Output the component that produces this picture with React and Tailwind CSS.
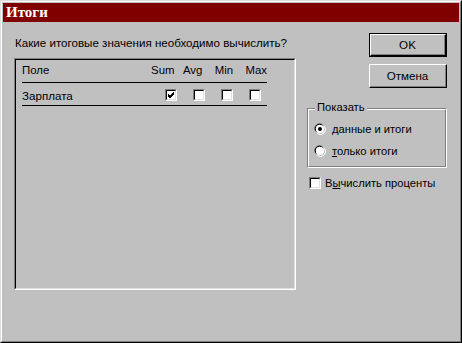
import React from "react";

const font = { fontFamily: '"Liberation Sans", Arial, sans-serif' };

const CheckBox = ({ checked }) => (
  <div className="w-[12px] h-[12px] border-t border-l border-[#808080] border-b border-r border-b-white border-r-white">
    <div className="w-full h-full border-t border-l border-black border-b border-r border-b-[#dfdfdf] border-r-[#dfdfdf] bg-white flex items-center justify-center">
      {checked && (
        <svg width="8" height="8" viewBox="0 0 8 8">
          <path d="M1 3 L3 5 L7 1 M1 4 L3 6 L7 2 M1 5 L3 7 L7 3" stroke="#000" strokeWidth="1" fill="none" />
        </svg>
      )}
    </div>
  </div>
);

const Radio = ({ checked }) => (
  <svg width="12" height="12" viewBox="0 0 12 12">
    <path d="M1.5 8.5 A5 5 0 0 1 8.5 1.5" stroke="#808080" fill="none" />
    <path d="M2.5 8.5 A4 4 0 0 1 8.5 2.5" stroke="#000" fill="none" />
    <path d="M3.5 10.5 A5 5 0 0 0 10.5 3.5" stroke="#fff" fill="none" />
    <circle cx="6" cy="6" r="4" fill="#fff" />
    {checked && <circle cx="6" cy="6" r="2" fill="#000" />}
  </svg>
);

const Button = ({ children, isDefault }) =>
  isDefault ? (
    <div className="w-[78px] h-[24px] border border-black">
      <div className="w-full h-full border-t border-l border-white border-b border-r border-b-black border-r-black">
        <div className="w-full h-full border-b border-r border-[#808080] border-t-0 border-l-0 flex items-center justify-center text-[11.6px] text-black">
          {children}
        </div>
      </div>
    </div>
  ) : (
    <div className="w-[78px] h-[24px] border-t border-l border-white border-b border-r border-b-black border-r-black">
      <div className="w-full h-full border-b border-r border-[#808080] flex items-center justify-center text-[11.6px] text-black">
        {children}
      </div>
    </div>
  );

export default function App() {
  return (
    <div
      className="w-[462px] h-[343px] bg-[#c0c0c0] border border-t-[#dfdfdf] border-l-[#dfdfdf] border-b-black border-r-black"
      style={font}
    >
      <div className="w-full h-full border border-t-white border-l-white border-b-[#808080] border-r-[#808080] p-px flex flex-col">
        <div className="h-[19px] bg-[#800000] flex items-center pl-[3px]">
          <span
            className="text-white font-bold text-[15px] leading-none"
            style={{ fontFamily: '"Liberation Serif", "Times New Roman", serif' }}
          >
            Итоги
          </span>
        </div>
        <div className="flex flex-row pl-[11px]">
          <div className="flex flex-col">
            <div className="mt-[14px] ml-px h-[13px] leading-[13px] text-[11.6px] text-black whitespace-nowrap">
              Какие итоговые значения необходимо вычислить?
            </div>
            <div className="mt-[9px] w-[282px] h-[232px] border border-t-[#808080] border-l-[#808080] border-b-white border-r-white">
              <div className="w-full h-full border border-t-black border-l-black border-b-[#dfdfdf] border-r-[#dfdfdf] pl-[6px] pt-[4px]">
                <div className="w-[245px]">
                  <div className="flex flex-row h-[14px] leading-[13px] text-[11.4px] text-black">
                    <div className="w-[130px]">Поле</div>
                    <div className="w-[32px]">Sum</div>
                    <div className="w-[32px]">Avg</div>
                    <div className="w-[31px]">Min</div>
                    <div>Max</div>
                  </div>
                  <div className="h-px bg-black mt-[4px]" />
                  <div className="flex flex-row items-center h-[22px] pt-[2px] text-[11.6px] text-black">
                    <div className="w-[143px] leading-[13px]">Зарплата</div>
                    <div className="flex flex-row gap-[16px]">
                      <CheckBox checked />
                      <CheckBox />
                      <CheckBox />
                      <CheckBox />
                    </div>
                  </div>
                  <div className="h-px bg-black" />
                </div>
              </div>
            </div>
          </div>
          <div className="flex flex-col w-[140px] ml-[11px] pt-[11px] text-[11.2px] text-black">
            <div className="self-end">
              <Button isDefault>OK</Button>
            </div>
            <div className="self-end mt-[7px]">
              <Button>Отмена</Button>
            </div>
            <div className="relative mt-[20px] h-[60px] border border-t-[#808080] border-l-[#808080] border-b-white border-r-white">
              <div className="w-full h-full border border-t-white border-l-white border-b-[#808080] border-r-[#808080] pl-[5px] pt-[13px]">
                <div className="flex flex-row items-center h-[12px] gap-[6px]">
                  <Radio checked />
                  <span className="leading-[13px]">
                    <u>д</u>анные и итоги
                  </span>
                </div>
                <div className="flex flex-row items-center h-[12px] gap-[6px] mt-[10px]">
                  <Radio />
                  <span className="leading-[13px]">
                    <u>т</u>олько итоги
                  </span>
                </div>
              </div>
              <span className="absolute left-[7px] top-[-8px] bg-[#c0c0c0] px-[2px] leading-[13px]">
                Показать
              </span>
            </div>
            <div className="flex flex-row items-center mt-[9px] ml-[2px] h-[12px] gap-[4px]">
              <CheckBox />
              <span className="leading-[13px]">
                В<u>ы</u>числить проценты
              </span>
            </div>
          </div>
        </div>
      </div>
    </div>
  );
}
